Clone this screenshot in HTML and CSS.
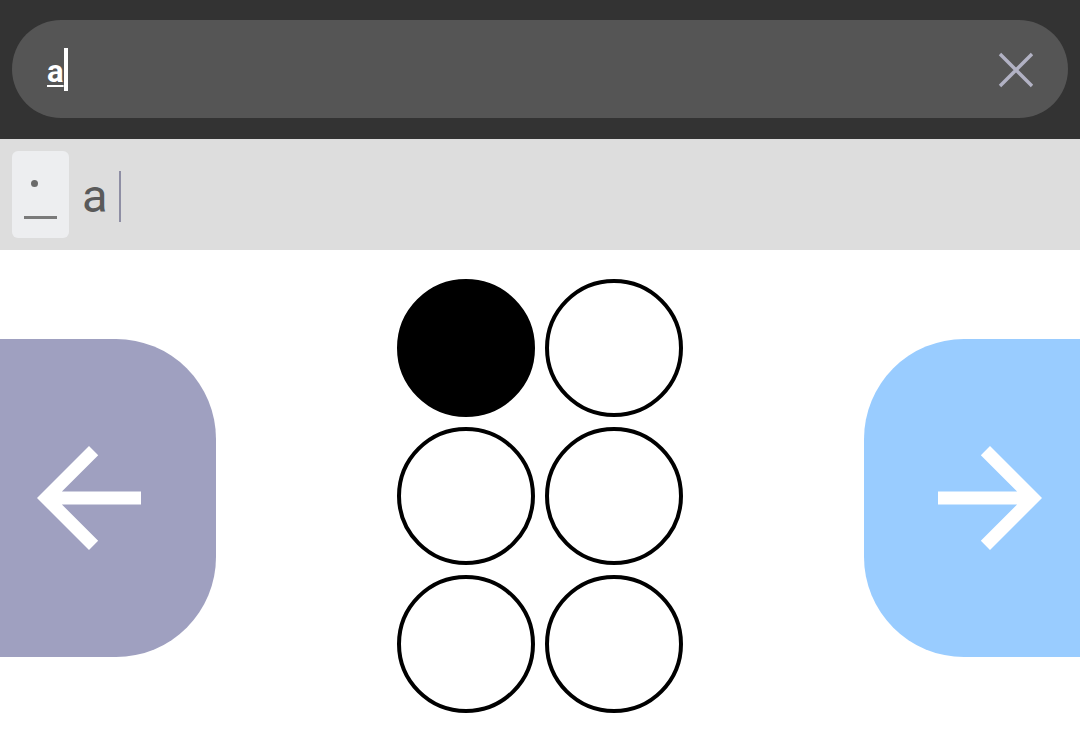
FILE: index.html
```html
<!DOCTYPE html>
<html>
<head>
<meta charset="utf-8">
<link rel="stylesheet" href="styles.css">
</head>
<body>
<header class="topbar">
  <div class="search">
    <span class="query">a</span><span class="caret"></span>
    <svg class="clear" viewBox="0 0 36 36" width="36" height="36"><path d="M2 2L34 34M34 2L2 34" stroke="#b2b2c4" stroke-width="3.4" fill="none"/></svg>
  </div>
</header>
<section class="preview">
  <div class="key">
    <span class="key-dot"></span>
    <span class="key-line"></span>
  </div>
  <span class="typed">a</span><span class="typed-caret"></span>
</section>
<main class="pad">
  <button class="nav nav-prev" aria-label="Previous">
    <svg viewBox="0 0 24 24" width="156" height="156"><path fill="#fff" d="M20 11H7.83l5.59-5.59L12 4l-8 8 8 8 1.41-1.41L7.83 13H20v-2z"/></svg>
  </button>
  <div class="cell">
    <span class="dot on"></span><span class="dot"></span>
    <span class="dot"></span><span class="dot"></span>
    <span class="dot"></span><span class="dot"></span>
  </div>
  <button class="nav nav-next" aria-label="Next">
    <svg viewBox="0 0 24 24" width="156" height="156"><path fill="#fff" d="M12 4l-1.41 1.41L16.17 11H4v2h12.17l-5.58 5.59L12 20l8-8z"/></svg>
  </button>
</main>
</body>
</html>
```
FILE: styles.css
```css
* { box-sizing: border-box; }
html, body { margin: 0; padding: 0; }
body {
  width: 1080px;
  height: 746px;
  overflow: hidden;
  background: #fff;
  font-family: Roboto, "Liberation Sans", sans-serif;
}
.topbar {
  height: 139px;
  background: #333333;
  padding: 20px 12px 0 12px;
}
.search {
  height: 98px;
  border-radius: 49px;
  background: #555555;
  display: flex;
  align-items: center;
  padding: 0 34px 0 35px;
}
.query {
  color: #fff;
  font-size: 31px;
  font-weight: 700;
  text-decoration: underline;
  text-decoration-thickness: 2px;
  text-underline-offset: 3px;
  line-height: 1;
  margin-top: 4px;
}
.caret {
  width: 4px;
  height: 43px;
  background: #fff;
}
.clear {
  margin-left: auto;
  margin-top: 2px;
}
.preview {
  height: 111px;
  background: #dddddd;
  display: flex;
  align-items: center;
  padding: 0 12px;
}
.key {
  width: 57px;
  height: 87px;
  background: #edeef0;
  border-radius: 6px;
  position: relative;
}
.key-dot {
  position: absolute;
  left: 19px;
  top: 29px;
  width: 7px;
  height: 7px;
  border-radius: 50%;
  background: #6a6a6a;
}
.key-line {
  position: absolute;
  left: 12px;
  top: 65px;
  width: 33px;
  height: 3px;
  background: #7a7a7a;
}
.typed {
  font-size: 47px;
  color: #5a5a5a;
  margin-left: 13px;
  line-height: 1;
  margin-top: 2px;
}
.typed-caret {
  width: 2px;
  height: 51px;
  background: #8e8ea4;
  margin-left: 11px;
  margin-top: 3px;
}
.pad {
  height: 496px;
  display: flex;
  align-items: center;
  justify-content: space-between;
}
.nav {
  width: 216px;
  height: 318px;
  border: none;
  padding: 0;
  margin: 0;
  display: flex;
  align-items: center;
  cursor: pointer;
}
.nav-prev {
  background: #9fa0c0;
  border-radius: 0 100px 100px 0;
  padding-left: 11px;
}
.nav-next {
  background: #99ccff;
  border-radius: 100px 0 0 100px;
  padding-left: 48px;
}
.cell {
  display: grid;
  grid-template-columns: 138px 138px;
  grid-auto-rows: 138px;
  gap: 10px;
  margin-top: -4px;
}
.dot {
  border: 4.5px solid #000;
  border-radius: 50%;
  background: #fff;
}
.dot.on { background: #000; }
```
